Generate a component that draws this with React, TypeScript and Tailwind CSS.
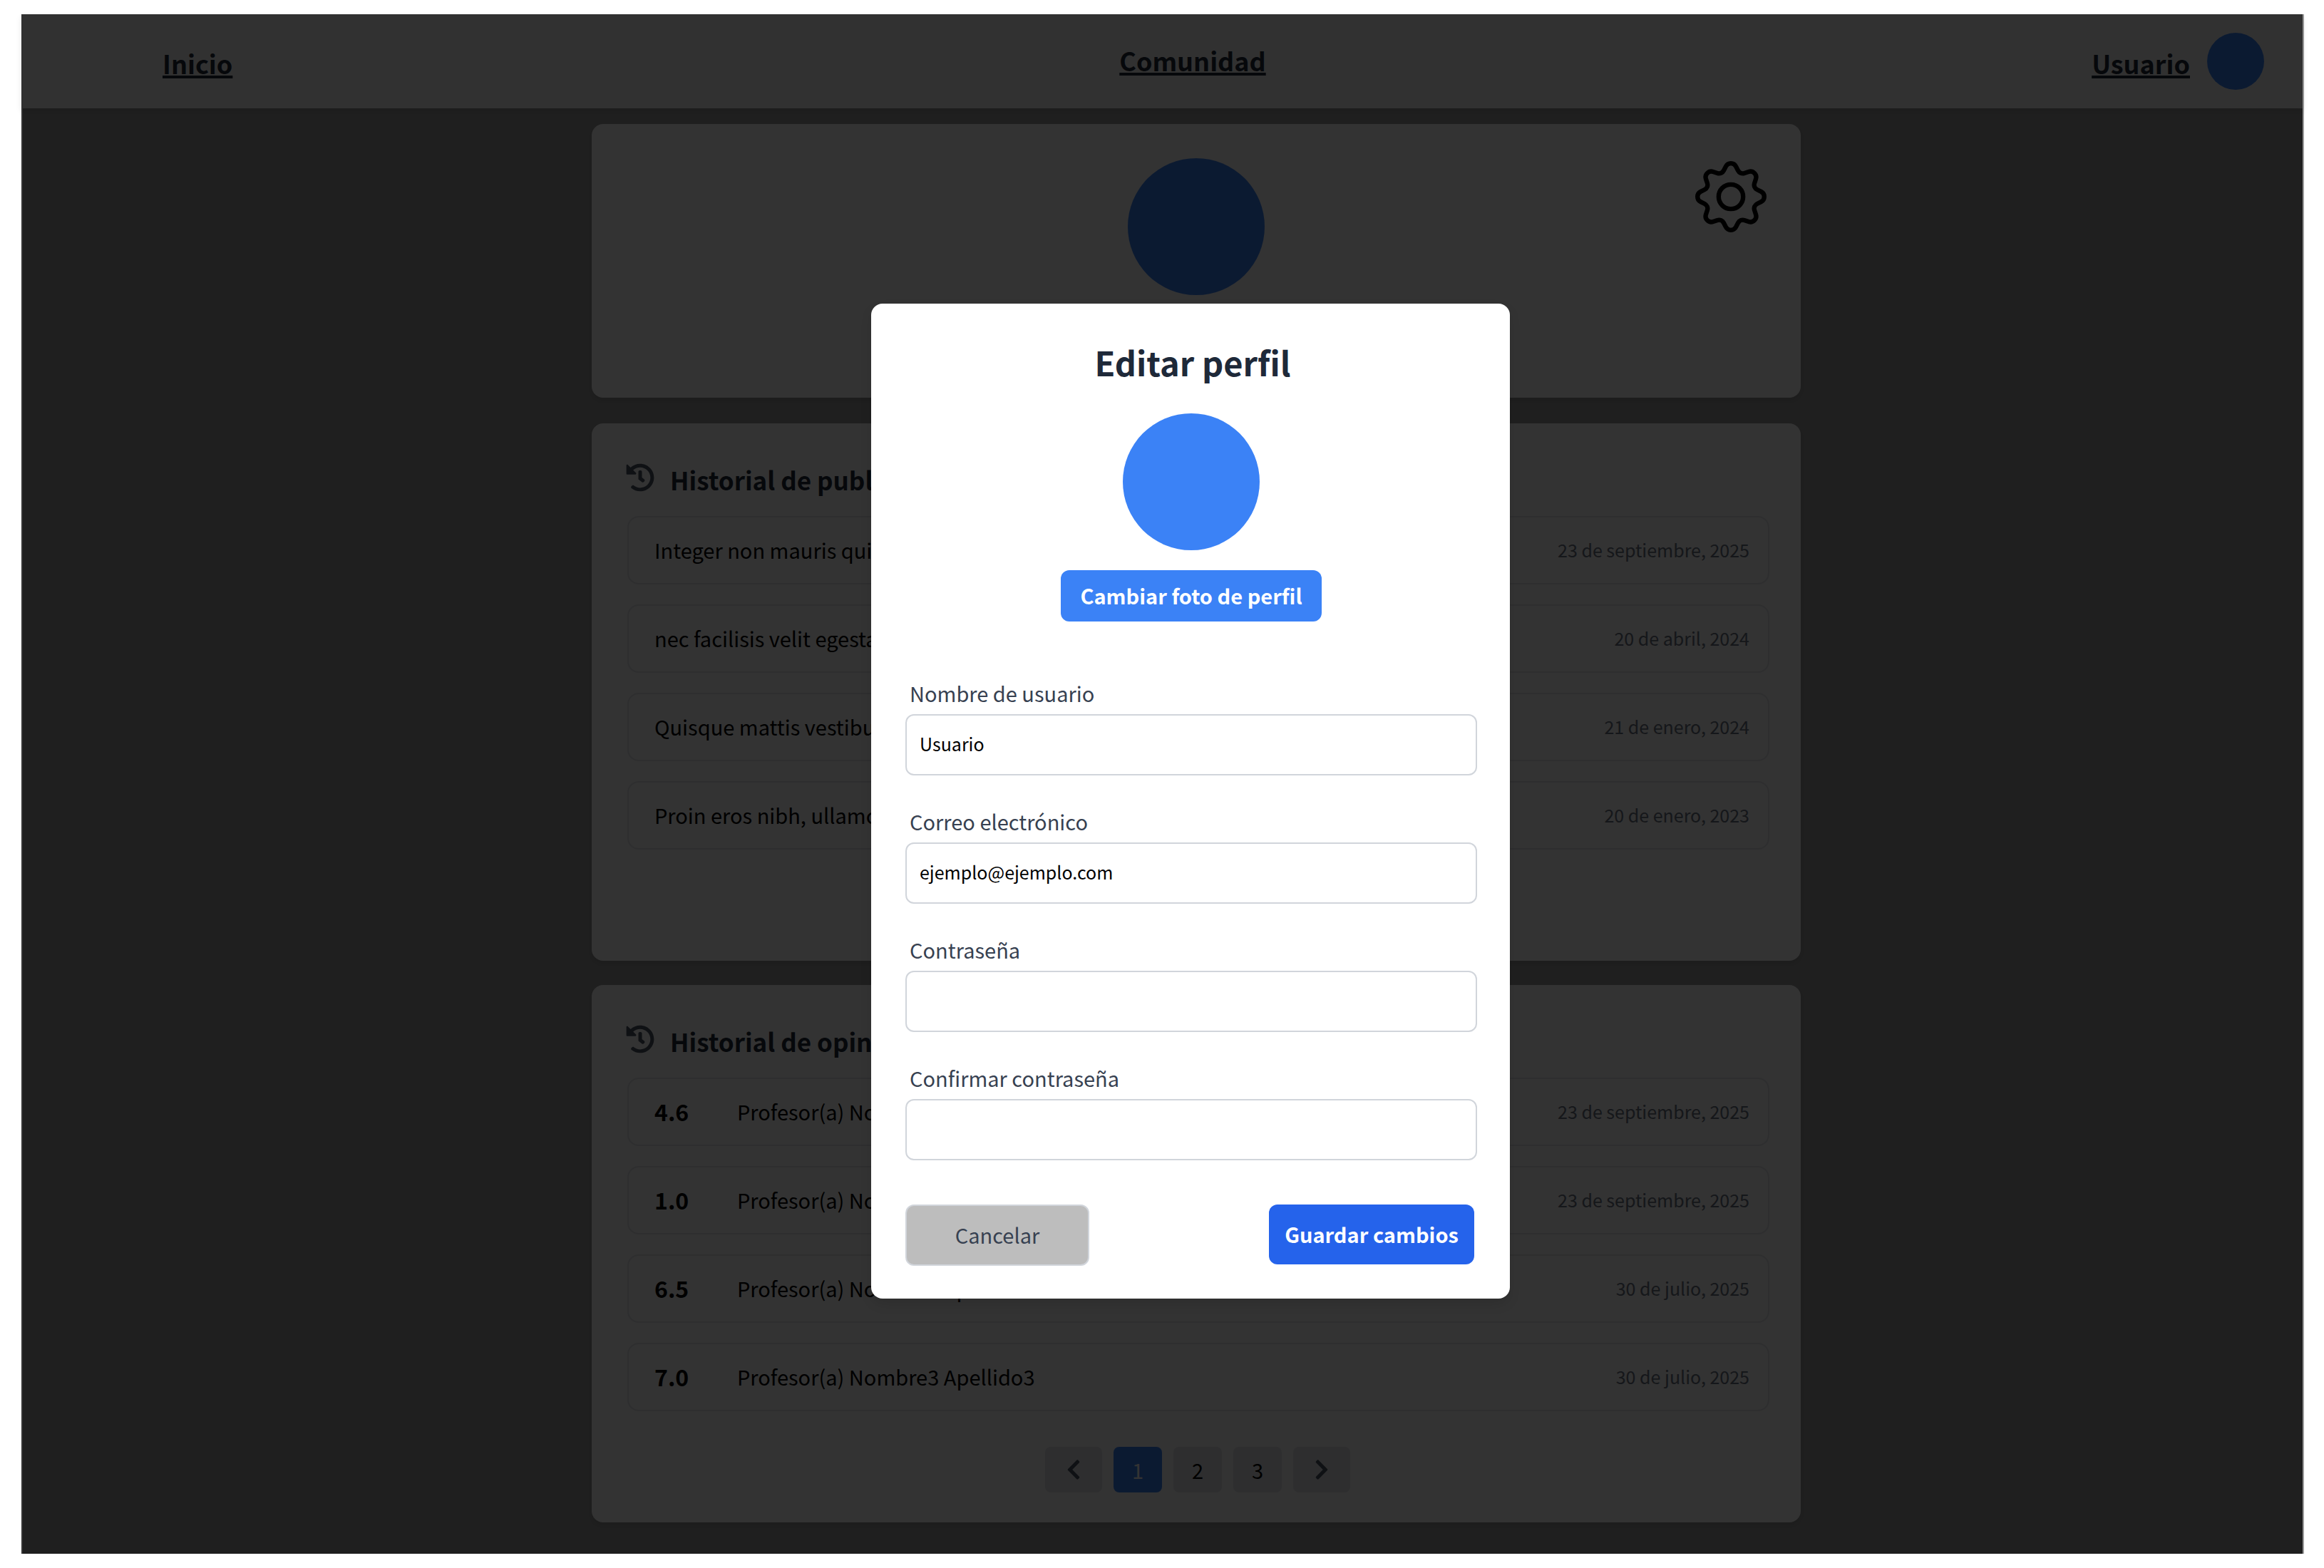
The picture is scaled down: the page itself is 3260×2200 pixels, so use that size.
import { FaChevronLeft, FaChevronRight, FaHistory } from "react-icons/fa";
import type { ReactNode } from "react";

const posts = [
  { title: "Integer non mauris quis", date: "23 de septiembre, 2025" },
  { title: "nec facilisis velit egestas", date: "20 de abril, 2024" },
  { title: "Quisque mattis vestibulum", date: "21 de enero, 2024" },
  { title: "Proin eros nibh, ullamcorper", date: "20 de enero, 2023" },
];

const reviews = [
  { score: "4.6", name: "Profesor(a) Nombre Apellido", date: "23 de septiembre, 2025" },
  { score: "1.0", name: "Profesor(a) Nombre1 Apellido1", date: "23 de septiembre, 2025" },
  { score: "6.5", name: "Profesor(a) Nombre2 Apellido2", date: "30 de julio, 2025" },
  { score: "7.0", name: "Profesor(a) Nombre3 Apellido3", date: "30 de julio, 2025" },
];

const fields = [
  { id: "username", label: "Nombre de usuario", type: "text", value: "Usuario" },
  { id: "email", label: "Correo electrónico", type: "email", value: "ejemplo@ejemplo.com" },
  { id: "password", label: "Contraseña", type: "password", value: "" },
  { id: "confirm", label: "Confirmar contraseña", type: "password", value: "" },
];

// Outline of the cog: eight rounded lobes joined by rounded valleys.
function cogPath() {
  const at = (x: number, y: number, turn: number) => {
    const a = (turn * Math.PI) / 4;
    const px = 150 + x * Math.cos(a) + y * Math.sin(a);
    const py = 150 - y * Math.cos(a) + x * Math.sin(a);
    return `${px.toFixed(1)} ${py.toFixed(1)}`;
  };
  let d = `M${at(-21.4, 127.3, 0)}`;
  for (let i = 0; i < 8; i++) {
    d += `A24 24 0 0 1 ${at(21.4, 127.3, i)}L${at(30.1, 110.2, i)}`;
    d += `A22 22 0 0 0 ${at(-30.1, 110.2, i + 1)}L${at(-21.4, 127.3, i + 1)}`;
  }
  return d + "Z";
}

function CogIcon() {
  return (
    <svg viewBox="0 0 300 300" className="size-[100px]" fill="none" stroke="currentColor" strokeWidth={19} aria-hidden="true">
      <path d={cogPath()} strokeLinejoin="round" />
      <circle cx={150} cy={150} r={51.5} />
    </svg>
  );
}

function Card({ className, children }: { className: string; children: ReactNode }) {
  return (
    <section className={`w-full max-w-[1696px] rounded-2xl bg-[#fcfcfc] shadow-[0_4px_8px_rgba(0,0,0,0.1)] ${className}`}>
      {children}
    </section>
  );
}

function CardTitle({ children }: { children: ReactNode }) {
  return (
    <div className="mb-[30px] flex h-11 items-start gap-[22px]">
      <FaHistory className="size-10 text-gray-600" aria-hidden="true" />
      <h2 className="text-[35px] leading-[46px] font-bold text-gray-800">{children}</h2>
    </div>
  );
}

function Row({ score, text, date }: { score?: string; text: string; date: string }) {
  return (
    <li className="flex h-24 items-center rounded-2xl border-2 border-gray-200 pr-[26px] pb-0.5 pl-9">
      {score && <strong className="w-[116px] text-[32px] leading-10 font-bold">{score}</strong>}
      <span className="text-[29px] leading-10">{text}</span>
      <time className="ml-auto text-[25px] leading-10 text-gray-500">{date}</time>
    </li>
  );
}

function Pagination() {
  return (
    <nav aria-label="Paginación" className="mt-[50px] flex justify-center gap-4 text-[29px] leading-10">
      <button type="button" aria-label="Anterior" className="flex h-16 w-20 items-center justify-center rounded-lg bg-gray-200">
        <FaChevronLeft className="size-8 text-gray-600" />
      </button>
      <button type="button" aria-current="page" className="h-16 w-[68px] rounded-lg bg-[#3b82f6] text-white">1</button>
      <button type="button" className="h-16 w-[68px] rounded-lg bg-gray-200">2</button>
      <button type="button" className="h-16 w-[68px] rounded-lg bg-gray-200">3</button>
      <button type="button" aria-label="Siguiente" className="flex h-16 w-20 items-center justify-center rounded-lg bg-gray-200">
        <FaChevronRight className="size-8 text-gray-600" />
      </button>
    </nav>
  );
}

function EditProfile() {
  return (
    <form
      role="dialog"
      aria-labelledby="edit-title"
      className="flex w-full max-w-[896px] flex-col rounded-2xl bg-white pt-[54px] pr-[46px] pb-[46px] pl-12 shadow-[0_8px_16px_rgba(0,0,0,0.1)]"
    >
      <h1 id="edit-title" className="pl-1 text-center text-[47px] leading-[56px] font-bold text-gray-800">
        Editar perfil
      </h1>
      <div className="mt-11 size-48 self-center rounded-full bg-[#3b82f6]" />
      <button type="button" className="mt-7 h-[72px] w-[366px] self-center rounded-xl bg-[#3b82f6] pb-0.5 text-[29px] leading-10 font-bold text-white">
        Cambiar foto de perfil
      </button>
      <div className="mt-20 flex flex-col gap-11">
        {fields.map((f) => (
          <div key={f.id} className="flex flex-col gap-2.5">
            <label htmlFor={f.id} className="pl-1.5 text-[29px] leading-10 text-[#374151]">
              {f.label}
            </label>
            <input
              id={f.id}
              type={f.type}
              defaultValue={f.value}
              className="h-[86px] w-full rounded-xl border-2 border-[#d1d5db] bg-white px-[18px] pb-1 text-[25px] leading-9 text-black"
            />
          </div>
        ))}
      </div>
      <div className="mt-[62px] flex items-start justify-between pr-1">
        <button type="button" className="h-[86px] w-[258px] rounded-xl border-2 border-[#d1d5db] bg-[#bdbdbd] pb-0.5 text-[29px] leading-10 text-[#374151]">
          Cancelar
        </button>
        <button type="submit" className="h-[84px] w-[288px] rounded-xl bg-[#2563eb] pb-0.5 text-[29px] leading-10 font-bold text-white">
          Guardar cambios
        </button>
      </div>
    </form>
  );
}

export default function App() {
  return (
    <div className="bg-white pt-5 pr-7 pb-5 pl-[30px] font-['Noto_Sans_CJK_JP','Noto_Sans',sans-serif] text-black">
      <div className="relative bg-[#9b9b9b]">
        <header className="relative mr-0.5 grid h-[132px] grid-cols-[1fr_auto_1fr] items-center bg-[#f5f5f5] pr-[54px] pl-[140px] text-[36px] leading-[52px] font-bold text-gray-800 shadow-[0_4px_8px_rgba(0,0,0,0.1)]">
          <div className="flex pt-1 pl-[58px]">
            <a href="#inicio" className="underline decoration-4 underline-offset-2">Inicio</a>
          </div>
          <a href="#comunidad" className="pb-1 underline decoration-4 underline-offset-2">Comunidad</a>
          <div className="flex items-center justify-end gap-6">
            <a href="#usuario" className="pt-1 underline decoration-4 underline-offset-2">Usuario</a>
            <div className="size-20 rounded-full bg-[#3b82f6]" />
          </div>
        </header>

        <main className="flex flex-col items-center border-l-2 border-white pt-[22px] pb-11 pl-[92px]">
          <Card className="relative flex justify-center pt-12 pb-36">
            <div className="size-48 rounded-full bg-[#3b82f6]" />
            <button type="button" aria-label="Configuración" className="absolute top-[52px] right-12">
              <CogIcon />
            </button>
          </Card>

          <Card className="mt-9 pt-14 pr-11 pb-[156px] pl-12">
            <CardTitle>Historial de publicaciones</CardTitle>
            <ul className="flex flex-col gap-7 pl-0.5">
              {posts.map((p) => (
                <Row key={p.title} text={p.title} date={p.date} />
              ))}
            </ul>
          </Card>

          <Card className="mt-[34px] pt-14 pr-11 pb-[42px] pl-12">
            <CardTitle>Historial de opiniones</CardTitle>
            <ul className="flex flex-col gap-7 pl-0.5">
              {reviews.map((r) => (
                <Row key={r.name} score={r.score} text={r.name} date={r.date} />
              ))}
            </ul>
            <Pagination />
          </Card>
        </main>

        <div className="absolute inset-y-0 right-0.5 left-0 flex items-start justify-center bg-black/80 pt-[406px] pl-20">
          <EditProfile />
        </div>
      </div>
    </div>
  );
}
